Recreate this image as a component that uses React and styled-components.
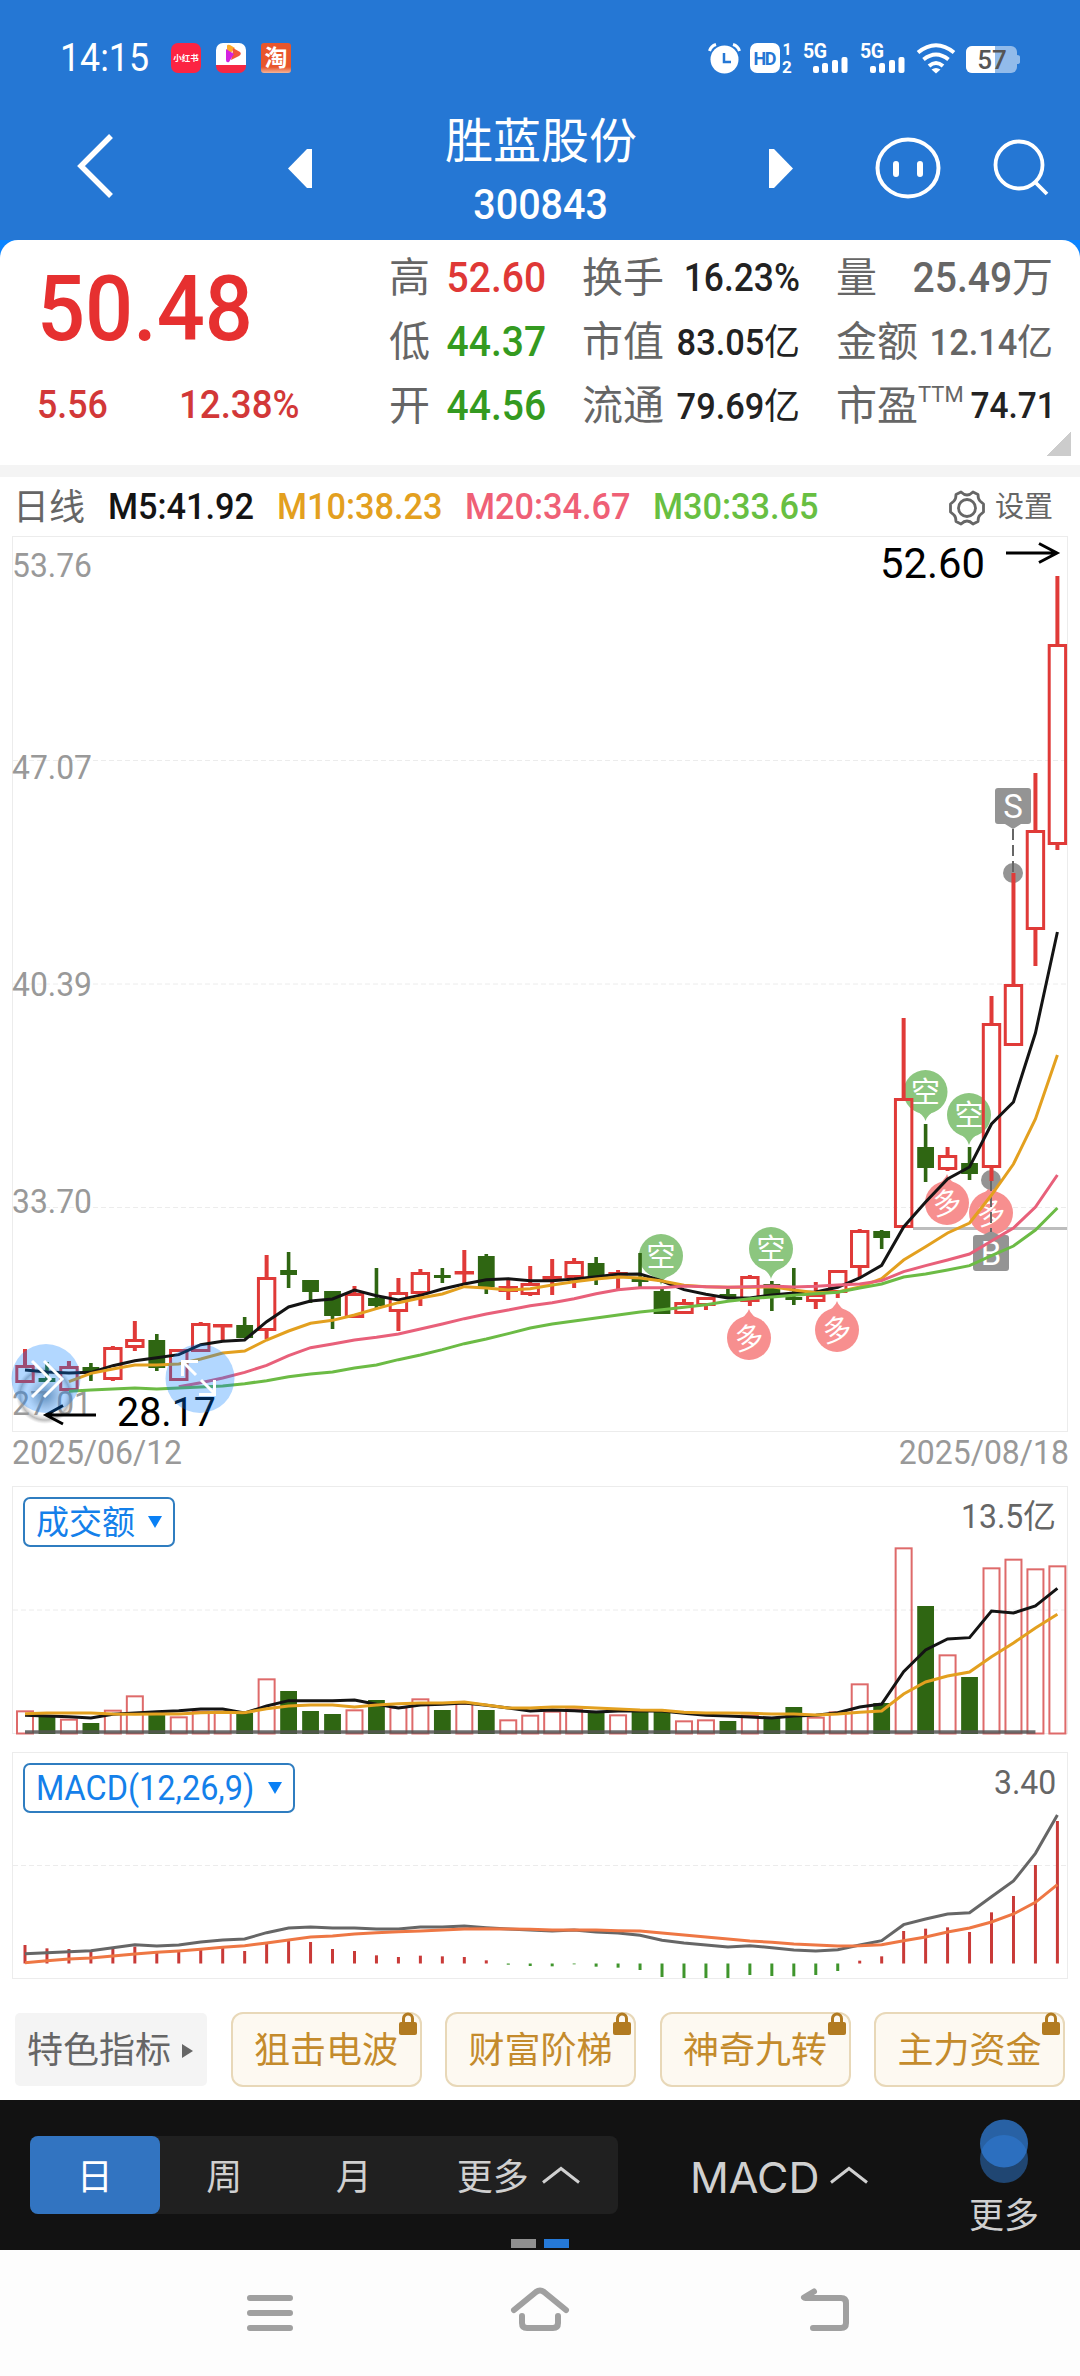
import styled, { createGlobalStyle } from "styled-components";

const GlobalStyle = createGlobalStyle`
  * { box-sizing: border-box; }
  body {
    margin: 0;
    background: #fff;
    font-family: Roboto, "Noto Sans CJK SC", sans-serif;
    line-height: 1;
  }
  svg {
    display: block;
    flex-shrink: 0;
    overflow: visible;
  }
`

const RED = "#e03a38";
const GREEN = "#2f6612";
const BLACK = "#141414";
const ORANGE = "#e3a01f";
const PINK = "#e8607a";
const LIME = "#6cbb45";

// x of the n-th day, the same in all three charts
const dayX = (i) => 25 + i * 21.966;

// [up, high, low, body top, body bottom]
const candles = [
  [1, 1349, 1383, 1365, 1383], [0, 1362, 1382, 1378, 1382], [1, 1361, 1391, 1366, 1391],
  [0, 1363, 1381, 1367, 1372], [1, 1346, 1381, 1347, 1380], [1, 1321, 1351, 1339, 1348],
  [0, 1334, 1371, 1340, 1368], [1, 1349, 1381, 1349, 1381], [1, 1322, 1352, 1323, 1352],
  [1, 1324, 1340, 1324, 1327], [0, 1317, 1338, 1325, 1338], [1, 1255, 1339, 1277, 1331],
  [0, 1252, 1288, 1270, 1275], [0, 1280, 1303, 1280, 1292], [0, 1291, 1329, 1291, 1316],
  [1, 1286, 1318, 1293, 1318], [0, 1268, 1308, 1298, 1306], [1, 1278, 1331, 1292, 1312],
  [1, 1269, 1306, 1272, 1294], [0, 1268, 1283, 1275, 1278], [1, 1250, 1285, 1271, 1274],
  [0, 1254, 1294, 1256, 1287], [1, 1280, 1300, 1286, 1292], [1, 1266, 1296, 1283, 1295],
  [1, 1259, 1295, 1276, 1280], [1, 1258, 1288, 1261, 1278], [0, 1257, 1285, 1263, 1277],
  [1, 1270, 1289, 1272, 1275], [0, 1253, 1287, 1279, 1282], [0, 1289, 1314, 1291, 1314],
  [1, 1299, 1314, 1302, 1314], [1, 1297, 1310, 1297, 1306], [0, 1289, 1299, 1294, 1297],
  [1, 1275, 1306, 1276, 1302], [0, 1281, 1311, 1284, 1296], [0, 1268, 1305, 1297, 1300],
  [1, 1282, 1309, 1294, 1302], [1, 1270, 1298, 1270, 1293], [1, 1229, 1277, 1230, 1268],
  [0, 1230, 1249, 1231, 1238], [1, 1018, 1227, 1098, 1228], [0, 1124, 1182, 1147, 1168],
  [1, 1147, 1171, 1155, 1170], [0, 1147, 1180, 1163, 1174], [1, 996, 1181, 1023, 1168],
  [1, 873, 1046, 984, 1046], [1, 773, 966, 830, 930], [1, 576, 850, 644, 845],
];

// line values are in thirds of a pixel from the base of their chart
const m5 = [570, 576, 579, 577, 557, 542, 533, 524, 494, 484, 480, 425, 381, 363, 357, 330, 347, 360, 346, 327, 312, 299, 296, 302, 302, 297, 290, 283, 282, 303, 329, 343, 354, 354, 345, 339, 336, 322, 294, 256, 141, 66, -3, -39, -168, -234, -441, -744];
const m10 = [605, 580, 567, 555, 555, 552, 537, 519, 513, 480, 453, 430, 421, 405, 386, 368, 354, 342, 320, 324, 330, 326, 315, 305, 297, 291, 294, 303, 316, 320, 322, 322, 320, 330, 338, 336, 321, 296, 240, 200, 159, 129, 45, -48, -183, -375];
const m20 = [620, 608, 594, 577, 556, 527, 503, 492, 480, 472, 462, 447, 432, 416, 402, 390, 377, 368, 356, 341, 329, 323, 323, 318, 320, 322, 320, 318, 321, 319, 315, 312, 302, 275, 257, 240, 222, 183, 144, 81, -15];
const m30 = [634, 630, 627, 624, 627, 624, 621, 618, 611, 602, 590, 582, 576, 564, 555, 539, 525, 509, 491, 477, 461, 444, 432, 423, 414, 405, 396, 389, 382, 374, 364, 356, 351, 346, 341, 337, 324, 312, 291, 282, 270, 257, 227, 198, 150, 84];

const volume = [691, 709, 716, 729, 689, 646, 705, 709, 692, 692, 699, 595, 633, 693, 702, 688, 660, 680, 655, 690, 668, 690, 718, 704, 692, 685, 694, 703, 692, 692, 721, 718, 723, 704, 713, 681, 710, 694, 610, 669, 202, 378, 523, 591, 262, 236, 265, 256];
const vol5 = [706, 708, 710, 714, 703, 699, 695, 692, 687, 687, 699, 678, 662, 662, 662, 660, 673, 684, 675, 673, 669, 676, 684, 693, 690, 692, 696, 693, 692, 693, 700, 706, 708, 711, 714, 708, 706, 698, 681, 672, 575, 510, 477, 473, 393, 399, 378, 325];
const vol10 = [701, 699, 699, 699, 702, 703, 702, 702, 698, 697, 698, 686, 678, 675, 675, 681, 675, 671, 669, 669, 666, 675, 684, 684, 681, 681, 684, 687, 690, 691, 697, 699, 699, 700, 702, 702, 705, 702, 697, 693, 642, 606, 588, 576, 530, 489, 444, 403];

const macdBars = [1395, 1405, 1407, 1412, 1405, 1400, 1414, 1414, 1407, 1403, 1413, 1390, 1381, 1386, 1407, 1413, 1426, 1431, 1427, 1429, 1431, 1441, 1454, 1458, 1459, 1453, 1460, 1463, 1470, 1491, 1494, 1494, 1494, 1485, 1488, 1489, 1485, 1473, 1442, 1429, 1353, 1346, 1342, 1356, 1297, 1248, 1155, 1023];
const dif = [1421, 1418, 1415, 1412, 1403, 1394, 1398, 1395, 1386, 1380, 1377, 1358, 1344, 1341, 1344, 1344, 1347, 1347, 1341, 1341, 1338, 1343, 1347, 1350, 1353, 1350, 1356, 1359, 1366, 1381, 1389, 1395, 1401, 1397, 1403, 1410, 1413, 1409, 1395, 1382, 1334, 1317, 1302, 1298, 1250, 1203, 1120, 1005];
const dea = [1448, 1442, 1437, 1434, 1428, 1422, 1417, 1413, 1408, 1402, 1397, 1389, 1380, 1371, 1368, 1362, 1358, 1355, 1353, 1350, 1347, 1346, 1347, 1348, 1350, 1350, 1350, 1352, 1353, 1359, 1365, 1371, 1377, 1383, 1387, 1392, 1395, 1398, 1397, 1394, 1382, 1371, 1356, 1344, 1326, 1302, 1267, 1214];

const Line = ({ data, base, start = 0, color, width = 3 }) => (
  <polyline
    points={data.map((v, i) => `${dayX(start + i)},${base + v / 3}`).join(" ")}
    fill="none"
    stroke={color}
    strokeWidth={width}
  />
)

const Frame = ({ top, bottom, grid }) => (
  <g fill="none" stroke="#ececec">
    <rect x="12.5" y={top} width="1055" height={bottom - top} />
    {grid.map((y) => <path key={y} d={`M13 ${y}H1067`} strokeDasharray="5 3" />)}
  </g>
)

const Candle = ({ i, up, high, low, top, bottom }) => {
  const x = dayX(i);
  if (up) {
    return (
      <g stroke={RED}>
        <path d={`M${x} ${high}V${top}M${x} ${bottom}V${low}`} strokeWidth="4" />
        <rect x={x - 8.2} y={top + 1.5} width="16.4" height={Math.max(bottom - top - 3, 0.5)} fill="none" strokeWidth="3" />
      </g>
    )
  }
  return (
    <g fill={GREEN}>
      <rect x={x - 1.8} y={high} width="3.6" height={low - high} />
      <rect x={x - 8.4} y={top} width="16.8" height={bottom - top} />
    </g>
  )
}

// long / short balloons, tip is the y its tail points to
const Balloon = ({ x, y, tip, type }) => {
  const side = tip > y ? 1 : -1;
  return (
    <g>
      <g fill={type === "空" ? "#8cc67f" : "#f78f8f"}>
        <circle cx={x} cy={y} r="22" />
        <path d={`M${x - 13} ${y + side * 17}Q${x - 2} ${y + side * 22} ${x} ${tip}Q${x + 2} ${y + side * 22} ${x + 13} ${y + side * 17}Z`} />
      </g>
      <text x={x} y={y + 10.5} fontSize="29" textAnchor="middle" fill="#fff"
        transform={type === "多" ? `rotate(-10 ${x} ${y})` : undefined}>{type}</text>
    </g>
  )
}

const AxisText = ({ x = 12, y, w = 80, size = 34, fill = "#999", children }) => (
  <text x={x} y={y} fontSize={size} fill={fill} textLength={w} lengthAdjust="spacingAndGlyphs">{children}</text>
)

const PriceChart = () => (
  <svg width="1080" height="904" viewBox="0 530 1080 904">
    <Frame top={536.5} bottom={1431.5} grid={[760.5, 984, 1207.5]} />
    <KnobShadow />
    <AxisText y={577}>53.76</AxisText>
    <AxisText y={779}>47.07</AxisText>
    <AxisText y={996}>40.39</AxisText>
    <AxisText y={1213}>33.70</AxisText>
    <AxisText y={1415}>27.01</AxisText>

    <path d="M913 1228.5H1067" stroke="#bdbdbd" strokeWidth="3" />
    <Balloon type="空" x={661} y={1256} tip={1285} />
    <Balloon type="空" x={771} y={1249} tip={1279} />
    <Balloon type="空" x={925.5} y={1092} tip={1121} />
    <Balloon type="空" x={969} y={1115} tip={1145} />
    <Balloon type="多" x={749} y={1338} tip={1309} />
    <Balloon type="多" x={837} y={1330} tip={1301} />
    <Balloon type="多" x={947} y={1203} tip={1174} />
    <Balloon type="多" x={991} y={1213} tip={1184} />

    <g fill="#949494">
      <path d="M998 788h30a3 3 0 0 1 3 3v30a3 3 0 0 1-3 3h-7l-8 5-8-5h-7a3 3 0 0 1-3-3v-30a3 3 0 0 1 3-3z" />
      <circle cx="1013" cy="873" r="10" />
      <circle cx="991" cy="1180" r="10" />
      <path d="M976 1235h7l8-4 8 4h7a3 3 0 0 1 3 3v30a3 3 0 0 1-3 3h-30a3 3 0 0 1-3-3v-30a3 3 0 0 1 3-3z" />
    </g>
    <path d="M1013 829V873M991 1180V1232" stroke="#666" strokeWidth="2" strokeDasharray="11 5" />
    <g fill="#fff" fontSize="33" textAnchor="middle">
      <text x="1013" y="818">S</text>
      <text x="991" y="1265">B</text>
    </g>

    {candles.map(([up, high, low, top, bottom], i) => (
      <Candle key={i} i={i} up={up} high={high} low={low} top={top} bottom={bottom} />
    ))}
    <Line data={m5} base={1180} color={BLACK} />
    <Line data={m10} base={1180} start={2} color={ORANGE} />
    <Line data={m20} base={1180} start={7} color={PINK} />
    <Line data={m30} base={1180} start={2} color={LIME} />

    <AxisText x={880} y={578} w={105} size={42} fill="#000">52.60</AxisText>
    <AxisText x={117} y={1426} w={99} size={41} fill="#000">28.17</AxisText>
    <g fill="none" stroke="#000" strokeWidth="3">
      <path d="M1006 553H1057M1039 543.500L1057 553L1039 562.500" />
      <path d="M96 1415H46M63 1405.500L46 1415L63 1424" />
    </g>

    <FloatButtons />
  </svg>
)

const KnobShadow = () => (
  <g>
    <defs>
      <radialGradient id="shade">
        <stop offset="0" stopColor="#4a6b86" stopOpacity="0.7" />
        <stop offset="0.45" stopColor="#777" stopOpacity="0.2" />
        <stop offset="0.65" stopColor="#fff" stopOpacity="0.1" />
        <stop offset="0.86" stopColor="#555" stopOpacity="0.4" />
        <stop offset="1" stopColor="#888" stopOpacity="0" />
      </radialGradient>
    </defs>
    <circle cx="45" cy="1395" r="29" fill="url(#shade)" />
  </g>
)

const FloatButtons = () => (
  <g>
    <g fill="#007aff" fillOpacity="0.3">
      <circle cx="46" cy="1378.500" r="34.500" />
      <circle cx="200" cy="1378.500" r="34.500" />
    </g>
    <g fill="none" stroke="#fff" strokeWidth="3">
      <path d="M32 1361L50 1379L32 1397M44 1361L62 1379L44 1397" />
      <path d="M196 1375L183 1362M182.500 1376V1361.500H198M201 1380L214 1393M199 1394.500H214.500V1380" />
    </g>
  </g>
)

const VolumeChart = () => (
  <svg width="1080" height="260" viewBox="0 1480 1080 260">
    <Frame top={1486.5} bottom={1733.5} grid={[1610]} />
    {volume.map((v, i) => {
      const y = 1480 + v / 3;
      return candles[i][0]
        ? <rect key={i} x={dayX(i) - 8} y={y + 1} width="16" height={1732.5 - y} fill="none" stroke="#de6a6a" strokeWidth="2" />
        : <rect key={i} x={dayX(i) - 8.4} y={y} width="16.8" height={1734 - y} fill={GREEN} />
    })}
    <path d={`M25 1732H${dayX(46)}`} stroke="#555" strokeOpacity="0.85" strokeWidth="3.500" />
    <Line data={vol5} base={1480} color={BLACK} />
    <Line data={vol10} base={1480} color={ORANGE} />
  </svg>
)

const MacdChart = () => (
  <svg width="1080" height="245" viewBox="0 1740 1080 245">
    <Frame top={1752.5} bottom={1978.5} grid={[1865.5]} />
    {macdBars.map((v, i) => (
      <path key={i} d={`M${dayX(i)} 1963.500V${1480 + v / 3}`} stroke={v < 1450 ? "#c93a38" : "#3f952c"} strokeWidth="3" />
    ))}
    <Line data={dif} base={1480} color="#666" />
    <Line data={dea} base={1480} color="#ee7744" />
  </svg>
)

const StatusIcons = () => (
  <svg width="314" height="34" viewBox="706 41 314 34" fill="#fff">
    <circle cx="724.500" cy="59.500" r="14" />
    <path d="M709.500 51Q711 46 716 44.500M739.500 51Q738 46 733 44.500" fill="none" stroke="#fff" strokeWidth="3" />
    <path d="M724 53V62H731" fill="none" stroke="#2577d4" strokeWidth="2.500" />
    <rect x="750" y="43" width="30" height="30" rx="7" />
    <text x="765" y="65" fontSize="18" fontWeight="700" textAnchor="middle" fill="#2577d4" textLength="23">HD</text>
    <text x="787" y="55" fontSize="16" fontWeight="700" textAnchor="middle">1</text>
    <text x="787" y="73" fontSize="17" fontWeight="700" textAnchor="middle">2</text>
    {[804, 861].map((x) => (
      <g key={x}>
        <text x={x - 1} y="57.500" fontSize="19.500" fontWeight="700" textLength="24">5G</text>
        <rect x={x + 9} y="66" width="6" height="7" rx="2" />
        <rect x={x + 18} y="63" width="6" height="10" rx="2" />
        <rect x={x + 28} y="60" width="6" height="13" rx="2" />
        <rect x={x + 37.5} y="57" width="6" height="16" rx="2" />
      </g>
    ))}
    <g fill="none" stroke="#fff" strokeWidth="4">
      <path d="M918 52.500Q936 38 954 52.500" />
      <path d="M923.500 59.500Q936 49.500 948.500 59.500" />
      <path d="M929 66Q936 60 943 66" />
    </g>
    <path d="M931.500 69.500Q936 66.500 940.500 69.500L936 73.500Z" />
    <rect x="966" y="46" width="51" height="27" rx="6" fillOpacity="0.5" />
    <path d="M1017 55q3 0 3 2v5q0 2-3 2z" fillOpacity="0.5" />
    <path d="M972 46H995V73H972A6 6 0 0 1 966 67V52A6 6 0 0 1 972 46Z" />
    <text x="992" y="69" fontSize="26" fontWeight="500" textAnchor="middle" fill="#555">57</text>
  </svg>
)

const VideoLogo = () => (
  <svg width="22" height="22" viewBox="0 0 22 22">
    <path d="M7 3Q7 1 10 2L15 5L9 12L7 14Z" fill="#ffa927" />
    <path d="M13 5L20 9Q22 11 19 13L11 17Q13 10 13 5Z" fill="#f4543a" />
    <path d="M6 6L14 11L9 19Q6 20 6 17Z" fill="#d321e0" />
  </svg>
)

const Gear = () => (
  <svg width="36" height="36" viewBox="-18 -18 36 36" fill="none" stroke="#666" strokeWidth="2.800" strokeLinejoin="round">
    <circle r="8.500" />
    <path d="M-6 -16Q-3 -13 0 -13T6 -16L11 -13.500Q11 -9 13 -7L16.500 -4V4L13 7Q11 9 11 13.500L6 16Q3 13 0 13T-6 16L-11 13.500Q-11 9 -13 7L-16.500 4V-4L-13 -7Q-11 -9 -11 -13.500Z" />
  </svg>
)

const Lock = () => (
  <LockBadge width="18" height="23" viewBox="0 0 18 23">
    <path d="M4.500 10V6.500a4.500 4.500 0 0 1 9 0V10" fill="none" stroke="#b27b21" strokeWidth="3" />
    <rect y="10" width="18" height="13" rx="2" fill="#b27b21" />
  </LockBadge>
)

const Chevron = () => (
  <svg width="38" height="18" viewBox="0 0 38 18" fill="none" stroke="#d0d0d0" strokeWidth="3">
    <path d="M1 16.500L19 2.500L37 16.500" />
  </svg>
)

const stats = [
  { label: "高", value: "52.60", color: "#df3836", size: 42 },
  { label: "换手", value: "16.23%", color: "#222", size: 38 },
  { label: "量", value: "25.49", unit: "万", color: "#666", size: 42 },
  { label: "低", value: "44.37", color: "#349a20", size: 42 },
  { label: "市值", value: "83.05", unit: "亿", color: "#222", size: 37 },
  { label: "金额", value: "12.14", unit: "亿", color: "#666", size: 37 },
  { label: "开", value: "44.56", color: "#349a20", size: 42 },
  { label: "流通", value: "79.69", unit: "亿", color: "#222", size: 37 },
  { label: "市盈", sup: "TTM", value: "74.71", color: "#222", size: 36 },
];

const averages = [
  ["M5:41.92", BLACK], ["M10:38.23", ORANGE], ["M20:34.67", "#ef6076"], ["M30:33.65", "#68bf42"],
];

const App = () => (
  <Page>
    <GlobalStyle />
    <Top>
      <StatusBar>
        <Clock><Digits $size={38}>14:15</Digits></Clock>
        <AppIcons>
          <AppIcon $bg="#fc2442" $size={8.5}>小红书</AppIcon>
          <AppIcon $bg="linear-gradient(#fff 72%, #f62743 72%)"><VideoLogo /></AppIcon>
          <AppIcon $bg="linear-gradient(#e8562b 80%, #f2b59a)" $size={23} $radius={3}>淘</AppIcon>
        </AppIcons>
        <StatusIcons />
      </StatusBar>
      <TitleBar>
        <svg width="38" height="66" viewBox="0 0 38 66" fill="none" stroke="#fff" strokeWidth="5.500"><path d="M35 1L5 31L35 61" /></svg>
        <svg width="24" height="39" viewBox="0 0 24 39" fill="#fff"><path d="M0 19.500L19 0H24V39H19Z" /></svg>
        <Title>
          <Name>胜蓝股份</Name>
          <Digits $size={42} $weight={500} $origin="center">300843</Digits>
        </Title>
        <svg width="24" height="39" viewBox="0 0 24 39" fill="#fff"><path d="M24 19.500L5 0H0V39H5Z" /></svg>
        <svg width="66" height="62" viewBox="0 0 66 62" fill="none" stroke="#fff">
          <ellipse cx="33" cy="31" rx="30.500" ry="28.500" strokeWidth="4" />
          <path d="M21 27V37M45 27V37" strokeWidth="6" strokeLinecap="round" />
        </svg>
        <svg width="56" height="58" viewBox="0 0 56 58" fill="none" stroke="#fff" strokeWidth="3.800">
          <circle cx="26" cy="26" r="23.500" />
          <path d="M42 43L54 55" />
        </svg>
      </TitleBar>
    </Top>

    <QuoteWrap>
      <Quote>
        <Price>
          <Digits $size={90} $weight={500} $color="#e63030">50.48</Digits>
          <Change>
            <Digits $size={38} $weight={500} $color="#d23838">5.56</Digits>
            <Digits $size={38} $weight={500} $color="#d23838" $stretch={0.965}>12.38%</Digits>
          </Change>
        </Price>
        <Stats>
          {stats.map((s) => (
            <Stat key={s.label}>
              <StatLabel>{s.label}{s.sup && <sup>{s.sup}</sup>}</StatLabel>
              <StatValue $color={s.color}>
                <Digits $size={s.size} $weight={500} $origin="right" $stretch={0.93}>{s.value}</Digits>
                {s.unit && <Unit $size={s.size}>{s.unit}</Unit>}
              </StatValue>
            </Stat>
          ))}
        </Stats>
        <Corner />
      </Quote>
    </QuoteWrap>

    <Legend>
      <Period>日线</Period>
      {averages.map(([text, color]) => (
        <Average key={text} $short={text.length < 9}>
          <Digits $size={36.5} $weight={500} $color={color}>{text}</Digits>
        </Average>
      ))}
      <Settings><Gear />设置</Settings>
    </Legend>

    <PriceChart />
    <Dates>
      <Digits $size={34}>2025/06/12</Digits>
      <Digits $size={34} $origin="right">2025/08/18</Digits>
    </Dates>

    <SubChart>
      <VolumeChart />
      <SubHead $top={17}>
        <Picker>成交额<Caret /></Picker>
        <Peak><Digits $size={34} $origin="right">13.5</Digits>亿</Peak>
      </SubHead>
    </SubChart>
    <SubChart>
      <MacdChart />
      <SubHead $top={23}>
        <Picker $wide><Digits $size={34.5}>MACD(12,26,9)</Digits><Caret /></Picker>
        <Peak><Digits $size={34} $origin="right">3.40</Digits></Peak>
      </SubHead>
    </SubChart>

    <Chips>
      <MoreChip>特色指标<Arrow /></MoreChip>
      {["狙击电波", "财富阶梯", "神奇九转", "主力资金"].map((name) => (
        <Chip key={name}>{name}<Lock /></Chip>
      ))}
    </Chips>

    <Tools>
      <Segments>
        <Segment $active>日</Segment>
        <Segment>周</Segment>
        <Segment>月</Segment>
        <Segment $grow>更多<Chevron /></Segment>
      </Segments>
      <Indicator>MACD<Chevron /></Indicator>
      <More>
        <svg width="48" height="64" viewBox="0 0 48 64" fill="#3080dc">
          <circle cx="24" cy="40" r="24" fillOpacity="0.48" />
          <circle cx="24" cy="24.500" r="24" fillOpacity="0.72" />
        </svg>
        更多
      </More>
      <Pager><Dot /><Dot $active /></Pager>
    </Tools>

    <NavBar>
      <svg width="60" height="50" viewBox="240 2285 60 50"><path d="M250 2298H290M250 2313H290M250 2328H290" /></svg>
      <svg width="66" height="50" viewBox="507 2285 66 50"><path d="M514 2310L536 2292Q540 2289 544 2292L566 2310M522 2316V2323Q522 2328 527 2328H553Q558 2328 558 2323V2316" /></svg>
      <svg width="60" height="50" viewBox="795 2285 60 50"><path d="M814 2291.500L804 2297.500L806 2298H841Q846 2298 846 2303V2323Q846 2328 841 2328H813" /></svg>
    </NavBar>
  </Page>
)

export default App;

const Page = styled.div`
  width: 1080px;
  height: 2376px;
  overflow: hidden;
  background: #fff;
`

const Digits = styled.span`
  display: inline-block;
  white-space: nowrap;
  font-size: ${(p) => p.$size}px;
  font-weight: ${(p) => p.$weight || 400};
  color: ${(p) => p.$color || "inherit"};
  transform: scaleX(${(p) => p.$stretch || 0.94});
  transform-origin: ${(p) => p.$origin || "left"};
`

const Top = styled.div`
  height: 240px;
  background: #2577d4;
  color: #fff;
`

const StatusBar = styled.div`
  display: flex;
  align-items: center;
  height: 116px;
  padding: 0 60px;
`

const Clock = styled.div`
  width: 111px;
`

const AppIcons = styled.div`
  display: flex;
  gap: 15px;
  flex: 1;
`

const AppIcon = styled.div`
  display: flex;
  align-items: center;
  justify-content: center;
  width: 30px;
  height: 30px;
  border-radius: ${(p) => p.$radius || 7}px;
  background: ${(p) => p.$bg};
  font-size: ${(p) => p.$size}px;
  font-weight: 700;
  white-space: nowrap;
  svg { margin-bottom: 8px; }
`

const TitleBar = styled.div`
  display: grid;
  grid-template-columns: 212px 133px 348px 106px 118px 60px;
  grid-template-rows: 104px;
  align-items: center;
  padding-left: 76px;
`

const Title = styled.div`
  display: flex;
  flex-direction: column;
  align-items: center;
  gap: 18px;
  width: 240px;
  padding-top: 8px;
`

const Name = styled.div`
  font-size: 48px;
`

const QuoteWrap = styled.div`
  background: linear-gradient(#0a84ff 30px, #f4f4f4 30px);
  padding-bottom: 12px;
`

const Quote = styled.div`
  position: relative;
  display: flex;
  height: 225px;
  border-radius: 18px 18px 0 0;
  background: #fff;
`

const Price = styled.div`
  width: 389px;
  padding: 25px 0 0 37px;
`

const Change = styled.div`
  display: flex;
  margin-top: 31px;
  > :first-child { width: 142px; }
`

const Stats = styled.div`
  display: grid;
  grid-template-columns: 157px 218px 217px;
  grid-auto-rows: 64px;
  column-gap: 36px;
  padding-top: 6px;
`

const Stat = styled.div`
  display: flex;
  align-items: center;
  justify-content: space-between;
`

const StatLabel = styled.div`
  display: flex;
  font-size: 41px;
  color: #666;
  white-space: nowrap;
  sup {
    margin-top: -2px;
    font-size: 22px;
    line-height: 1;
  }
`

const StatValue = styled.div`
  display: flex;
  align-items: baseline;
  color: ${(p) => p.$color};
`

const Unit = styled.span`
  font-size: ${(p) => (p.$size > 40 ? 41 : 36)}px;
`

const Corner = styled.i`
  position: absolute;
  right: 9px;
  bottom: 9px;
  width: 24px;
  height: 24px;
  background: linear-gradient(135deg, transparent 50%, #ccc 50%);
`

const Legend = styled.div`
  display: flex;
  align-items: center;
  height: 53px;
  padding: 8px 27px 0 13px;
`

const Period = styled.div`
  width: 95px;
  font-size: 36px;
  color: #666;
`

const Average = styled.div`
  width: ${(p) => (p.$short ? 169 : 188)}px;
`

const Settings = styled.div`
  display: flex;
  align-items: center;
  gap: 10px;
  margin-left: auto;
  font-size: 29px;
  color: #666;
  white-space: nowrap;
`

const Dates = styled.div`
  display: flex;
  justify-content: space-between;
  height: 46px;
  padding: 1px 11px 0 12px;
  color: #999;
`

const SubChart = styled.div`
  position: relative;
`

const SubHead = styled.div`
  position: absolute;
  top: ${(p) => p.$top}px;
  left: 23px;
  right: 24px;
  display: flex;
  justify-content: space-between;
`

const Picker = styled.div`
  display: flex;
  align-items: center;
  justify-content: space-between;
  width: ${(p) => (p.$wide ? 272 : 152)}px;
  height: 50px;
  padding: 0 11px;
  border: 2px solid #2f7dc0;
  border-radius: 7px;
  font-size: 33px;
  color: #1480ea;
  white-space: nowrap;
  > span { width: 220px; }
`

const Caret = styled.i`
  border: 7px solid transparent;
  border-top: 12px solid #0a80f5;
  border-bottom: 0;
`

const Peak = styled.div`
  padding-top: 2px;
  font-size: 33px;
  color: #666;
`

const Chips = styled.div`
  display: flex;
  align-items: center;
  justify-content: space-between;
  height: 115px;
  padding: 14px 15px 0;
`

const MoreChip = styled.div`
  display: flex;
  align-items: center;
  gap: 11px;
  width: 192px;
  height: 73px;
  padding: 2px 0 0 12px;
  border-radius: 5px;
  background: #f4f4f4;
  font-size: 36px;
  color: #666;
  white-space: nowrap;
`

const Arrow = styled.i`
  border: 7.5px solid transparent;
  border-left: 11px solid #666;
  border-right: 0;
`

const Chip = styled.div`
  position: relative;
  display: flex;
  align-items: center;
  justify-content: center;
  width: 191px;
  height: 75px;
  padding-top: 2px;
  border: 2px solid #e8d8b8;
  border-radius: 12px;
  background: #fdf9f1;
  font-size: 36px;
  color: #c48b2c;
  white-space: nowrap;
`

const LockBadge = styled.svg`
  position: absolute;
  top: -2px;
  right: 3px;
`

const Tools = styled.div`
  position: relative;
  display: flex;
  height: 150px;
  padding-left: 30px;
  background: #121212;
  color: #d0d0d0;
`

const Segments = styled.div`
  display: flex;
  width: 588px;
  height: 78px;
  margin-top: 36px;
  border-radius: 8px;
  background: #202020;
`

const Segment = styled.div`
  display: flex;
  align-items: center;
  justify-content: center;
  gap: 13px;
  flex: ${(p) => (p.$grow ? "1" : "0 0 129.5px")};
  padding-top: 5px;
  border-radius: 8px;
  background: ${(p) => (p.$active ? "#3274c1" : "transparent")};
  color: ${(p) => (p.$active ? "#fff" : "inherit")};
  font-size: 36px;
  svg { margin-bottom: 5px; }
`

const Indicator = styled.div`
  display: flex;
  align-items: center;
  gap: 11px;
  width: 352px;
  padding: 4px 0 0 72px;
  font-family: Inter, sans-serif;
  font-size: 43px;
  svg { margin-bottom: 4px; }
`

const More = styled.div`
  display: flex;
  flex-direction: column;
  align-items: center;
  gap: 16px;
  width: 68px;
  padding-top: 19px;
  font-size: 35px;
  white-space: nowrap;
`

const Pager = styled.div`
  position: absolute;
  left: 511px;
  bottom: 2px;
  display: flex;
  gap: 8px;
`

const Dot = styled.i`
  width: 25px;
  height: 9px;
  background: ${(p) => (p.$active ? "#2579d8" : "#909090")};
`

const NavBar = styled.div`
  display: grid;
  grid-template-columns: 267px 288px 60px;
  height: 126px;
  padding: 35px 0 0 240px;
  background: #fdfdfd;
  svg {
    fill: none;
    stroke: #a0a0a0;
    stroke-width: 6;
    stroke-linecap: round;
    stroke-linejoin: round;
  }
`
